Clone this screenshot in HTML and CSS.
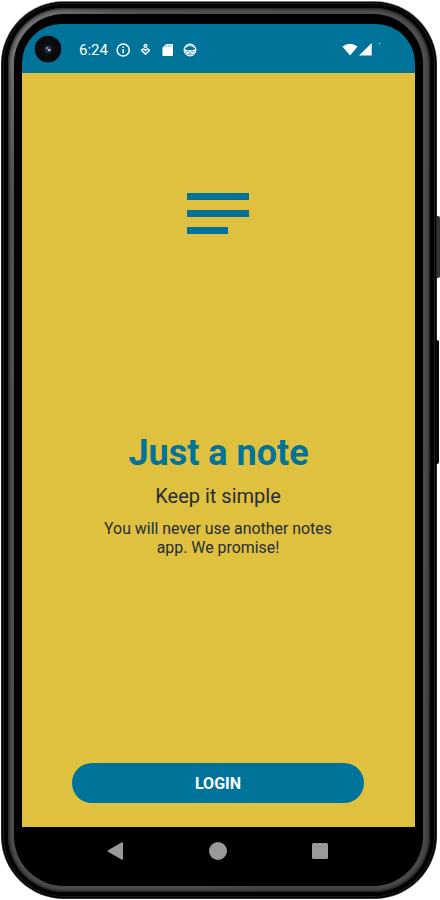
FILE: index.html
```html
<!DOCTYPE html>
<html lang="en">
<head>
<meta charset="utf-8">
<title>Just a note</title>
<link rel="stylesheet" href="styles.css">
</head>
<body>
<div class="device">
  <span class="side-button power"></span>
  <span class="side-button volume"></span>
  <div class="shell"><div class="rim"><div class="band"><div class="bezel">
    <div class="screen">
      <header class="status">
        <svg class="camera" viewBox="0 0 28 28"><circle cx="14" cy="14" r="13.3" fill="#090a0b"/><circle cx="14" cy="14" r="7" fill="#0d0e12"/><circle cx="14.3" cy="14.3" r="3.7" fill="#27304a"/><circle cx="13" cy="13" r="1.2" fill="#7886ad"/><circle cx="15.3" cy="15" r="1.3" fill="#b8c2df"/></svg>
        <span class="clock">6:24</span>
        <svg class="notices" viewBox="0 0 82 16"><g fill="none" stroke="#fff"><circle cx="7.2" cy="8" r="6.1" stroke-width="1.5"/><path d="M7.2 7.2v4.1M7.2 4.4v1.5" stroke-width="1.6"/><circle cx="29.5" cy="3.9" r="1.4" stroke-width="1.3"/><path d="M29.5 12.3 26 8.9c-.8-1.6 1.6-2.8 3.5-.5 1.9-2.3 4.3-1.1 3.5.5z" stroke-width="1.5"/></g><path d="M50.2 2H56q1 0 1 1v10q0 1-1 1h-8.6q-1 0-1-1V5.8z" fill="#fff"/><path d="M50.3 3.2v1.5M52.3 3.2v1.5M54.3 3.2v1.5" stroke="#00739a" stroke-width=".7"/><circle cx="74" cy="8" r="5.8" fill="#00739a" stroke="#fff" stroke-width="1.2"/><path d="M69 7 71 8h6l2-1v1.8q-.6 4-5 4t-5-4z" fill="#dceaf0"/><path d="M69.8 5.2Q74 1.8 78.2 5.2" fill="none" stroke="#dceaf0" stroke-width="1.2"/><path d="M71 9.3h1.5M75.5 9.3H77M73 11.2h2" stroke="#00739a" stroke-width=".8"/></svg>
        <svg class="signals" viewBox="0 0 40 16"><path d="M.4 4.5Q8-1.2 15.6 4.5L8 13.6z" fill="#fff"/><path d="M29.7 1v12.6H17z" fill="#fff"/><circle cx="37.5" cy="1.5" r=".8" fill="#b9dae4"/></svg>
      </header>
      <main class="welcome">
        <div class="logo"><i></i><i></i><i class="short"></i></div>
        <h1>Just a note</h1>
        <h2>Keep it simple</h2>
        <p>You will never use another notes<br>app. We promise!</p>
        <button class="login">LOGIN</button>
      </main>
      <nav class="navigation">
        <svg viewBox="0 0 20 20"><path d="M2.5 10 16 2.3V17.7z" fill="#999" stroke="#999" stroke-width="2" stroke-linejoin="round"/></svg>
        <svg viewBox="0 0 20 20"><circle cx="10" cy="10" r="9" fill="#999"/></svg>
        <svg viewBox="0 0 20 20"><rect x="2" y="2" width="16" height="16" rx="1.5" fill="#999"/></svg>
      </nav>
    </div>
  </div></div></div></div>
</div>
</body>
</html>
```
FILE: styles.css
```css
* { box-sizing: border-box; }
body { margin: 0; background: #fff; font-family: Roboto, sans-serif; overflow: hidden; }
.device { position: relative; width: 440px; height: 900px; padding: 1px 3px 1px 1px; }
.shell { width: 436px; height: 898px; padding: 1px; border-radius: 63px; background: linear-gradient(#777 0, #222 60px, #222 840px, #333 100%); }
.rim { height: 100%; padding: 6px 6px 6px 6px; border-radius: 62px; background: #020202; box-shadow: inset 0 0 0 1px #000, inset 0 0 0 2px #1d1d1d, inset 0 0 0 3px #000; }
.band { height: 100%; padding: 6px 7px 6px 6px; border-radius: 56px; background: linear-gradient(125deg, #858585 0, #707070 30px, #505050 110px, #484848 100%); box-shadow: inset 0 0 3px 1px #161616; }
.bezel { height: 100%; padding: 10px 8px 0 8px; border-radius: 50px; background: #000; }
.screen { width: 393px; height: 100%; display: flex; flex-direction: column; }
.status { height: 49px; flex: none; display: flex; align-items: flex-start; padding-top: 11px; background: #00739a; border-radius: 39px 39px 0 0; }
.camera { width: 28px; height: 28px; margin-left: 12px; }
.clock { width: 37px; margin: 6px 0 0 17px; color: #fff; font-size: 15px; line-height: 18px; }
.notices { width: 82px; height: 16px; margin: 7px 0 0; }
.signals { width: 40px; height: 16px; margin: 7px 0 0 144px; }
.welcome { height: 754px; flex: none; display: flex; flex-direction: column; align-items: center; background: #dfc03f; color: #262c35; text-align: center; }
.logo { width: 62px; height: 41px; margin: 120px 1px 0 0; display: flex; flex-direction: column; justify-content: space-between; }
.logo i { height: 7px; background: #00739a; }
.logo .short { width: 41px; }
h1 { margin: 197px 0 0; color: #00739a; font-size: 36px; line-height: 44px; font-weight: 700; }
h2 { margin: 8px 1px 0 0; font-size: 20px; line-height: 26px; font-weight: 400; }
p { margin: 10px 1px 0 0; font-size: 15.9px; line-height: 19px; }
.login { width: 292px; height: 40px; margin: auto 1px 24px 0; padding: 1px 0 0; border: 0; border-radius: 20px; background: #00739a; color: #fff; font: 700 16px/39px Roboto, sans-serif; }
.navigation { display: flex; justify-content: space-between; padding: 14px 85px 0 84px; }
.navigation svg { width: 20px; height: 20px; }
.side-button { position: absolute; right: 0; width: 3px; background: #333; border-radius: 0 2px 2px 0; }
.power { top: 216px; height: 62px; }
.volume { top: 340px; right: 1px; height: 124px; background: #050505; }
```
